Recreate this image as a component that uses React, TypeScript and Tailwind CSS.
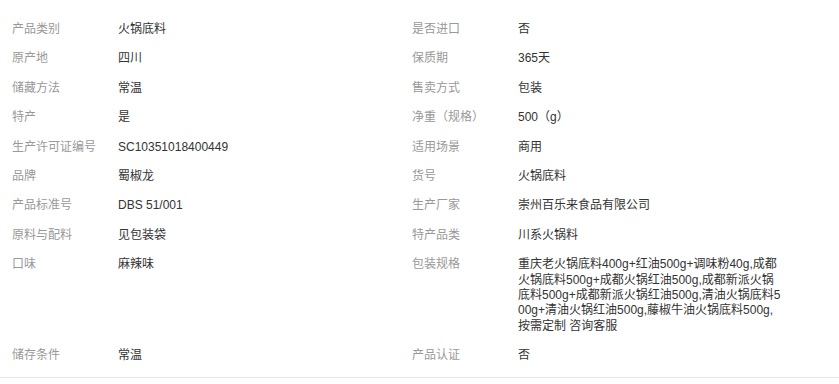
import React from "react";

const rows: [string, string][] = [
  ["产品类别", "火锅底料"],
  ["是否进口", "否"],
  ["原产地", "四川"],
  ["保质期", "365天"],
  ["储藏方法", "常温"],
  ["售卖方式", "包装"],
  ["特产", "是"],
  ["净重（规格）", "500（g）"],
  ["生产许可证编号", "SC10351018400449"],
  ["适用场景", "商用"],
  ["品牌", "蜀椒龙"],
  ["货号", "火锅底料"],
  ["产品标准号", "DBS 51/001"],
  ["生产厂家", "崇州百乐来食品有限公司"],
  ["原料与配料", "见包装袋"],
  ["特产品类", "川系火锅料"],
  ["口味", "麻辣味"],
  [
    "包装规格",
    "重庆老火锅底料400g+红油500g+调味粉40g,成都火锅底料500g+成都火锅红油500g,成都新派火锅底料500g+成都新派火锅红油500g,清油火锅底料500g+清油火锅红油500g,藤椒牛油火锅底料500g,按需定制 咨询客服",
  ],
  ["储存条件", "常温"],
  ["产品认证", "否"],
];

export default function App() {
  return (
    <div
      className="w-[839px] h-[384px] bg-white"
      style={{ fontFamily: '"Liberation Sans", Arial, "Noto Sans CJK SC", sans-serif' }}
    >
      <div className="border-b border-[#e5e5e5] pt-[15px] pb-[6px]">
        <div className="grid grid-cols-[400px_400px] text-[12px] leading-[15.4px]">
          {rows.map(([k, v], i) => (
            <div key={i} className="flex py-[7px] pl-[12px]">
              <div className="w-[106px] shrink-0 text-[#999999]">{k}</div>
              <div className="w-[265px] text-[#333333] break-all">{v}</div>
            </div>
          ))}
        </div>
      </div>
    </div>
  );
}
